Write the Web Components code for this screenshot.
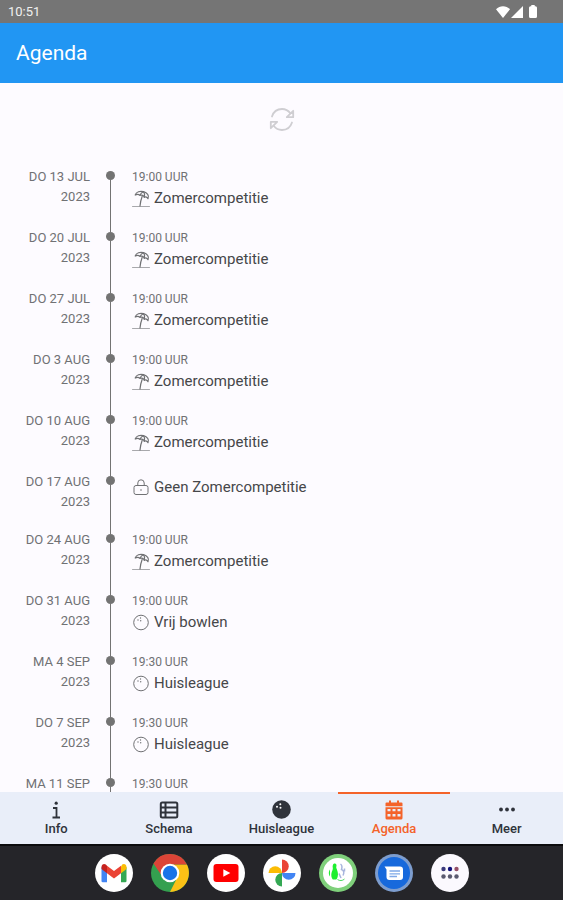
<!DOCTYPE html>
<html lang="nl">
<head>
<meta charset="utf-8">
<meta name="viewport" content="width=device-width, initial-scale=1">
<title>Agenda</title>
<style>
    html, body { height: 100%; margin: 0; }
    body {
        font-family: Roboto, "Open Sans", sans-serif;
        --bar: #2196f3;
        --surface: #fdfbff;
        --nav: #e9eef9;
        --accent: #f4632a;
        --text: #46474a;
        --text-2: #707174;
        --rail: #737373;
    }
</style>
</head>
<body>
<agenda-app></agenda-app>

<script>
const ICONS = {
    beach: `<svg viewBox="0 0 18 18" width="18" height="18" fill="none" stroke="currentColor" stroke-width="1.200" stroke-linecap="round" stroke-linejoin="round">
        <path d="M3.200 5C4.300 1.800 8 .8 11.500 1.700c3.700 1 6 3.800 4.500 7-.8-1.500-2.200-2.200-3.700-1.400-.5-1.700-2.300-2.700-4.300-2C6.700 4.200 4.700 4.200 3.200 5z"/>
        <path d="M8 5.300c.5-1.700 1.500-3 3.500-3.600 1.200 1.500 1.500 3.500.8 5.600M10.200 6.300C9.200 9 8.300 12.500 8 16"/><path d="M.5 16.500h17" stroke-opacity=".6" stroke-width="1"/></svg>`,
    lock: `<svg viewBox="0 0 18 18" width="18" height="18" fill="none" stroke="currentColor" stroke-width="1">
        <rect x="2" y="6.500" width="14" height="9" rx="2"/><path d="M5.800 6.500V4a3.200 3.200 0 0 1 6.400 0v2.500"/><circle cx="9" cy="11" r=".8" fill="currentColor" stroke="none"/></svg>`,
    ball: `<svg viewBox="0 0 18 18" width="18" height="18" fill="none" stroke="currentColor" stroke-width="1">
        <circle cx="9" cy="8.500" r="7.300"/><g fill="currentColor" stroke="none"><circle cx="6" cy="6" r=".7"/><circle cx="8.500" cy="4" r=".7"/><circle cx="8.700" cy="6.800" r=".7"/></g></svg>`,
    refresh: `<svg viewBox="0 0 26 26" width="26" height="26" fill="none" stroke="currentColor" stroke-width="1.800" stroke-linecap="round" stroke-linejoin="round">
        <path d="M3 9.500C4.500 4.800 8.500 2 13 2c3.500 0 6.300 1.500 8.300 4.200M23 15.500C21.500 20.200 17.500 23 13 23c-3.500 0-6.300-1.500-8.300-4.200"/>
        <path d="M24.200 3.800v6.400h-6.400zM1.800 21.200v-6.400h6.400z"/></svg>`,
    wifi: `<svg viewBox="0 0 14 12" width="14" height="12"><path fill="#fff" d="M7 12 0 3.200C2 1.200 4.500.2 7 .2s5 1 7 3z"/></svg>`,
    signal: `<svg viewBox="0 0 12 12" width="12" height="12"><path fill="#fff" d="M12 0v12H0z"/></svg>`,
    battery: `<svg viewBox="0 0 8 13" width="8" height="13"><path fill="#fff" d="M2.300 0h3.400v1.300h.8A1.500 1.500 0 0 1 8 2.800v8.700A1.500 1.500 0 0 1 6.500 13h-5A1.500 1.500 0 0 1 0 11.500V2.800a1.500 1.500 0 0 1 1.500-1.500h.8z"/></svg>`,
    info: `<svg viewBox="0 0 20 20" width="20" height="20" fill="none" stroke="currentColor" stroke-width="1.800"><circle cx="10.200" cy="3.200" r="1.600" fill="currentColor" stroke="none"/><path d="M7 8h3.500v9M6.500 17.500h7.500"/></svg>`,
    table: `<svg viewBox="0 0 20 20" width="20" height="20" fill="none" stroke="currentColor" stroke-width="2"><rect x="1.800" y="2.500" width="16.500" height="15" rx="1.500"/><path d="M1.500 7.500h17M1.500 12.500h17M6.500 2.500v15"/></svg>`,
    bowling: `<svg viewBox="0 0 20 20" width="20" height="20"><circle cx="10.500" cy="9.500" r="9.300" fill="currentColor"/><g fill="#fff"><circle cx="6" cy="6.700" r="1"/><circle cx="9.300" cy="4.200" r="1"/><circle cx="9.500" cy="7.700" r="1"/></g></svg>`,
    calendar: `<svg viewBox="0 0 20 20" width="20" height="20"><path fill="currentColor" d="M5 .5h2v2h6v-2h2v2h2.500a1 1 0 0 1 1 1v2.700h-17V3.500a1 1 0 0 1 1-1H5z"/>
        <path fill="currentColor" fill-rule="evenodd" d="M1.500 7.200h17v10.800a1.500 1.500 0 0 1-1.500 1.500H3A1.500 1.500 0 0 1 1.500 18zM3.500 9v2.300h3V9zm5 0v2.300h3V9zm5 0v2.300h3V9zm-10 5v2.500h3V14zm5 0v2.500h3V14zm5 0v2.500h3V14z"/></svg>`,
    more: `<svg viewBox="0 0 20 20" width="20" height="20" fill="currentColor"><circle cx="4" cy="9.500" r="1.900"/><circle cx="10" cy="9.500" r="1.900"/><circle cx="16" cy="9.500" r="1.900"/></svg>`,
    gmail: `<svg viewBox="0 0 38 38"><circle cx="19" cy="19" r="19" fill="#fff"/>
        <path fill="#4285f4" d="M6.500 13v14a1.300 1.300 0 0 0 1.300 1.300h4.200V17z"/><path fill="#34a853" d="M31.500 13v14a1.300 1.300 0 0 1-1.300 1.300H26V17z"/>
        <path fill="#fbbc04" d="M26 12.500v6.700l5.500-4.200v-2c0-2.600-2.600-3.700-4.300-2.400z"/><path fill="#ea4335" d="M12 19.200v-7.500l7 5.300 7-5.300v7.500l-7 5.300z"/>
        <path fill="#c5221f" d="M6.500 13v2l5.500 4.200v-7.500l-1.200-1.100C9.100 9.300 6.500 10.400 6.500 13z"/></svg>`,
    chrome: `<svg viewBox="0 0 38 38"><circle cx="19" cy="19" r="19" fill="#34a04f"/>
        <path fill="#fbc116" d="M19 10.500h16.900A19 19 0 0 1 19 38l7.400-14.700z"/><path fill="#db4437" d="M2.500 9.500a19 19 0 0 1 33.400 1H19a8.500 8.500 0 0 0-7.600 12.200z"/>
        <circle cx="19" cy="19" r="9.300" fill="#fff"/><circle cx="19" cy="19" r="7.200" fill="#1a73e8"/></svg>`,
    youtube: `<svg viewBox="0 0 38 38"><circle cx="19" cy="19" r="19" fill="#fff"/><rect x="6.500" y="10" width="25" height="18" rx="3" fill="#f00"/><path fill="#fff" d="m16.300 15.200 7 3.800-7 3.800z"/></svg>`,
    photos: `<svg viewBox="0 0 38 38"><circle cx="19" cy="19" r="19" fill="#fff"/>
        <path fill="#ea4335" d="M19 5.500a6.700 6.700 0 0 1 0 13.500z"/><path fill="#4285f4" d="M32.500 19A6.700 6.700 0 0 1 19 19z"/>
        <path fill="#34a853" d="M19 32.500A6.700 6.700 0 0 1 19 19z"/><path fill="#fbbc04" d="M5.500 19A6.700 6.700 0 0 1 19 19z"/></svg>`,
    bowlers: `<svg viewBox="0 0 38 38"><circle cx="19" cy="19" r="19" fill="#7fd07b"/><circle cx="19" cy="19" r="15" fill="#fff"/>
        <path fill="#1fef2f" d="M15.300 9.500c2-.3 2.600 1.500 2 3.300-.4 1.300.8 2.500 1.400 5.200.8 3.500-.3 6.500-1.500 7.500h-3.400c-1.200-1.500-1.900-4-1.300-6.500.5-2.300 1.600-3.500 1.300-5-.4-1.900 0-4.200 1.500-4.500z"/>
        <path fill="#1fef2f" d="M11 15.500v7c-1.600-1.500-1.600-5.500 0-7z"/>
        <path fill="none" stroke="#a8b5dd" stroke-width="1.500" d="M21.500 10c2 1.500 1.500 4 1 5.500 3 1 2.500 4 1.500 6M20 19.500l2 4.500M25.500 14.500v3"/><path fill="none" stroke="#53dc68" d="M18.500 25.500c2 1.500 5 1.500 7-.5"/></svg>`,
    messages: `<svg viewBox="0 0 38 38"><circle cx="19" cy="19" r="19" fill="#7d9dce"/><circle cx="19" cy="19" r="16" fill="#1769dc"/>
        <path fill="#fff" d="M9.500 12.500H25a3 3 0 0 1 3 3v7.500a3 3 0 0 1-3 3H14.500a3 3 0 0 1-3-3v-7.500z"/><path stroke="#7fa9e8" stroke-width="1.300" d="M14.500 17h10.500M14.500 19.800h10.500M14.500 22.500h7.500"/></svg>`,
    apps: `<svg viewBox="0 0 38 38"><circle cx="19" cy="19" r="19" fill="#fbf9fe"/><g><circle cx="12.500" cy="15" r="2.200" fill="#3a3a7c"/><circle cx="19" cy="15" r="2.200" fill="#11117c"/><circle cx="25.500" cy="15" r="2.200" fill="#965068"/>
        <g fill="#5a5a70"><circle cx="12.500" cy="22.500" r="2.200"/><circle cx="19" cy="22.500" r="2.200"/><circle cx="25.500" cy="22.500" r="2.200"/></g></g></svg>`,
};

const EVENTS = [
    { date: 'DO 13 JUL', time: '19:00 UUR', icon: 'beach', title: 'Zomercompetitie' },
    { date: 'DO 20 JUL', time: '19:00 UUR', icon: 'beach', title: 'Zomercompetitie' },
    { date: 'DO 27 JUL', time: '19:00 UUR', icon: 'beach', title: 'Zomercompetitie' },
    { date: 'DO 3 AUG', time: '19:00 UUR', icon: 'beach', title: 'Zomercompetitie' },
    { date: 'DO 10 AUG', time: '19:00 UUR', icon: 'beach', title: 'Zomercompetitie' },
    { date: 'DO 17 AUG', icon: 'lock', title: 'Geen Zomercompetitie' },
    { date: 'DO 24 AUG', time: '19:00 UUR', icon: 'beach', title: 'Zomercompetitie' },
    { date: 'DO 31 AUG', time: '19:00 UUR', icon: 'ball', title: 'Vrij bowlen' },
    { date: 'MA 4 SEP', time: '19:30 UUR', icon: 'ball', title: 'Huisleague' },
    { date: 'DO 7 SEP', time: '19:30 UUR', icon: 'ball', title: 'Huisleague' },
    { date: 'MA 11 SEP', time: '19:30 UUR' },
];

class StatusBar extends HTMLElement {
    constructor() {
        super();
        this.attachShadow({ mode: 'open' }).innerHTML = `
            <style>
                :host {
                    display: flex;
                    align-items: center;
                    justify-content: space-between;
                    height: 23px;
                    padding: 0 26px 0 8px;
                    background: #757575;
                    color: #f0f0f0;
                    font-size: 13px;
                    line-height: 23px;
                }
                .icons { display: flex; align-items: center; gap: 1px; }
                .icons svg:last-child { margin-left: 5px; }
            </style>
            <slot></slot>
            <span class="icons">${ICONS.wifi}${ICONS.signal}${ICONS.battery}</span>
        `;
    }
}
customElements.define('status-bar', StatusBar);

class AppBar extends HTMLElement {
    constructor() {
        super();
        this.attachShadow({ mode: 'open' }).innerHTML = `
            <style>
                :host { display: block; background: var(--bar); padding: 0 16px; }
                h1 { margin: 0; font-size: 21px; font-weight: 400; line-height: 60px; color: #fff; }
            </style>
            <h1><slot></slot></h1>
        `;
    }
}
customElements.define('app-bar', AppBar);

/* One row of the timeline: date, dot with rail, slot for the title */
class AgendaItem extends HTMLElement {
    constructor() {
        super();
        this.attachShadow({ mode: 'open' });
    }

    connectedCallback() {
        const time = this.getAttribute('time');
        const icon = this.getAttribute('icon');
        this.shadowRoot.innerHTML = `
            <style>
                :host {
                    display: grid;
                    grid-template-columns: 90px 9px 1fr;
                    column-gap: 16px;
                }
                .date {
                    padding-bottom: 18px;
                    text-align: right;
                    font-size: 13px;
                    line-height: 20px;
                    color: var(--text-2);
                }
                .date span { display: block; }
                .rail {
                    display: flex;
                    flex-direction: column;
                    align-items: center;
                    padding-top: 4px;
                    margin-bottom: -4px;
                }
                .dot { width: 9px; height: 9px; border-radius: 50%; background: var(--rail); }
                .line { flex: 1; width: 1px; background: var(--rail); }
                .time { font-size: 12px; line-height: 20px; color: var(--text-2); }
                .title {
                    display: flex;
                    align-items: center;
                    gap: 4px;
                    font-size: 15px;
                    line-height: 23px;
                    color: var(--text);
                }
                .body { padding: 0 0 18px 1px; }
                .body.all-day { padding-top: 4px; }
                svg { flex: none; color: var(--text-2); }
            </style>
            <div class="date"><span>${this.getAttribute('date')}</span><span>2023</span></div>
            <div class="rail"><span class="dot"></span><span class="line"></span></div>
            <div class="body${time ? '' : ' all-day'}">
                ${time ? `<div class="time">${time}</div>` : ''}
                ${icon ? `<div class="title">${ICONS[icon]}<slot></slot></div>` : ''}
            </div>
        `;
    }
}
customElements.define('agenda-item', AgendaItem);

class AgendaList extends HTMLElement {
    constructor() {
        super();
        this.attachShadow({ mode: 'open' }).innerHTML = `
            <style>
                :host {
                    display: block;
                    overflow-y: auto;
                    scrollbar-width: none;
                    background: var(--surface);
                }
                button {
                    display: block;
                    width: 26px;
                    height: 26px;
                    margin: 24px auto 34px;
                    padding: 0;
                    border: 0;
                    background: none;
                    color: #cfced2;
                    cursor: pointer;
                }
                svg { display: block; }
            </style>
            <button type="button" aria-label="Vernieuwen">${ICONS.refresh}</button>
            <div role="list">
                ${EVENTS.map(e => `
                    <agenda-item role="listitem" date="${e.date}"
                        ${e.time ? `time="${e.time}"` : ''}
                        ${e.icon ? `icon="${e.icon}"` : ''}>${e.title || ''}</agenda-item>
                `).join('')}
            </div>
        `;
    }
}
customElements.define('agenda-list', AgendaList);

class TabItem extends HTMLElement {
    constructor() {
        super();
        this.attachShadow({ mode: 'open' });
    }

    connectedCallback() {
        const active = this.hasAttribute('active');
        this.shadowRoot.innerHTML = `
            <style>
                :host { display: block; flex: 1; }
                a {
                    display: flex;
                    flex-direction: column;
                    align-items: center;
                    padding: 6px 0 6px;
                    border-top: 2px solid transparent;
                    color: #2f333b;
                    font-size: 13px;
                    font-weight: 500;
                    line-height: 18px;
                    text-decoration: none;
                }
                a[aria-current] { border-color: var(--accent); color: var(--accent); }
                svg { display: block; }
            </style>
            <a href="#${this.getAttribute('icon')}"${active ? ' aria-current="page"' : ''}>
                ${ICONS[this.getAttribute('icon')]}
                <span><slot></slot></span>
            </a>
        `;
    }
}
customElements.define('tab-item', TabItem);

class TabNav extends HTMLElement {
    constructor() {
        super();
        this.attachShadow({ mode: 'open' }).innerHTML = `
            <style>
                :host { display: block; background: var(--nav); }
                nav { display: flex; }
            </style>
            <nav><slot></slot></nav>
        `;
    }
}
customElements.define('tab-nav', TabNav);

class AppDock extends HTMLElement {
    constructor() {
        super();
        const apps = [['gmail', 'Gmail'], ['chrome', 'Chrome'], ['youtube', 'YouTube'], ['photos', 'Foto\'s'],
            ['bowlers', 'Bowling'], ['messages', 'Berichten'], ['apps', 'Alle apps']];
        this.attachShadow({ mode: 'open' }).innerHTML = `
            <style>
                :host {
                    display: flex;
                    justify-content: center;
                    gap: 18px;
                    padding: 8px 0;
                    background: #252529;
                    border-top: 2px solid #0c0c0e;
                }
                button { width: 38px; height: 38px; padding: 0; border: 0; border-radius: 50%; background: none; cursor: pointer; }
                svg { display: block; width: 100%; height: 100%; }
            </style>
            ${apps.map(([icon, name]) => `<button type="button" aria-label="${name}">${ICONS[icon]}</button>`).join('')}
        `;
    }
}
customElements.define('app-dock', AppDock);

class AgendaApp extends HTMLElement {
    constructor() {
        super();
        this.attachShadow({ mode: 'open' }).innerHTML = `
            <style>
                :host { display: flex; flex-direction: column; height: 100%; }
                status-bar, app-bar, tab-nav, app-dock { flex: none; }
                agenda-list { flex: 1; min-height: 0; }
            </style>
            <status-bar>10:51</status-bar>
            <app-bar>Agenda</app-bar>
            <agenda-list></agenda-list>
            <tab-nav>
                <tab-item icon="info">Info</tab-item>
                <tab-item icon="table">Schema</tab-item>
                <tab-item icon="bowling">Huisleague</tab-item>
                <tab-item icon="calendar" active>Agenda</tab-item>
                <tab-item icon="more">Meer</tab-item>
            </tab-nav>
            <app-dock></app-dock>
        `;
    }
}
customElements.define('agenda-app', AgendaApp);
</script>
</body>
</html>
